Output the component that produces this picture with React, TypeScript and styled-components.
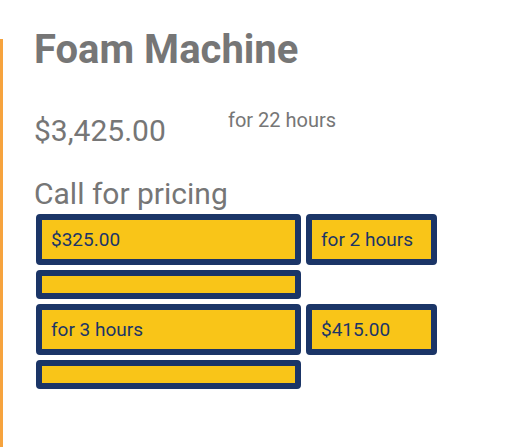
import React from 'react';
import styled, { createGlobalStyle } from 'styled-components';

const GlobalStyle = createGlobalStyle`
  html, body {
    margin: 0;
    padding: 0;
    background: #ffffff;
  }
  body {
    font-family: Roboto, "Liberation Sans", Arial, sans-serif;
  }
`;

const Page = styled.div`
  display: flex;
  align-items: flex-start;
  width: 512px;
  height: 447px;
  overflow: hidden;
`;

const AccentStrip = styled.div`
  width: 3px;
  margin-top: 39px;
  align-self: stretch;
  background: #f6a33e;
`;

const Content = styled.div`
  display: flex;
  flex-direction: column;
  padding: 26px 0 0 31px;
`;

const Title = styled.h1`
  margin: 0;
  font-size: 40px;
  font-weight: 700;
  line-height: 47px;
  color: #767676;
`;

const PriceRow = styled.div`
  display: flex;
  align-items: flex-start;
  margin-top: 36px;
`;

const Price = styled.div`
  width: 194px;
  margin-top: 4px;
  font-size: 30px;
  line-height: 35px;
  color: #767676;
`;

const Duration = styled.div`
  font-size: 20px;
  line-height: 23px;
  color: #767676;
`;

const CallText = styled.div`
  margin-top: 28px;
  font-size: 30px;
  line-height: 35px;
  color: #767676;
`;

const OptionList = styled.div`
  display: flex;
  flex-direction: column;
  gap: 5px;
  margin: 3px 0 0 2px;
`;

const OptionRow = styled.div`
  display: flex;
  gap: 5px;
`;

const Option = styled.div<{ $wide?: boolean; $short?: boolean }>`
  box-sizing: border-box;
  width: ${(p) => (p.$wide ? '265px' : '131px')};
  height: ${(p) => (p.$short ? '29px' : '51px')};
  padding: 0 9px;
  display: flex;
  align-items: center;
  border: 6px solid #1b3567;
  border-radius: 4px;
  background: #f9c518;
  color: #1b3567;
  font-size: 19px;
`;

const options = [
  { left: '$325.00', right: 'for 2 hours' },
  { left: 'for 3 hours', right: '$415.00' },
];

export default function App() {
  return (
    <>
      <GlobalStyle />
      <Page>
        <AccentStrip />
        <Content>
          <Title>Foam Machine</Title>
          <PriceRow>
            <Price>$3,425.00</Price>
            <Duration>for 22 hours</Duration>
          </PriceRow>
          <CallText>Call for pricing</CallText>
          <OptionList>
            {options.map((o) => (
              <React.Fragment key={o.left}>
                <OptionRow>
                  <Option $wide>{o.left}</Option>
                  <Option>{o.right}</Option>
                </OptionRow>
                <OptionRow>
                  <Option $wide $short />
                </OptionRow>
              </React.Fragment>
            ))}
          </OptionList>
        </Content>
      </Page>
    </>
  );
}
